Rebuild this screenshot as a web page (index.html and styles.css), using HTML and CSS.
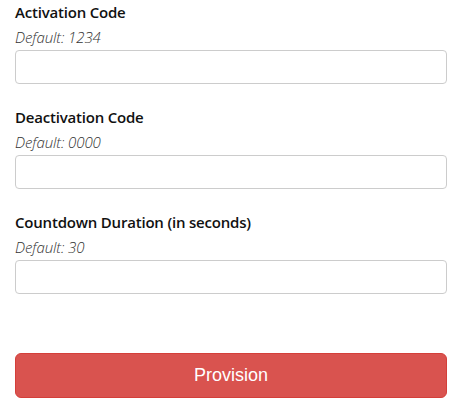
FILE: index.html
```html
<!DOCTYPE html>
<html>
<head>
<meta charset="utf-8">
<link rel="stylesheet" href="styles.css">
</head>
<body>
<form class="form">
  <div class="field">
    <label class="label">Activation Code</label>
    <div class="hint">Default: 1234</div>
    <input class="input" type="text">
  </div>
  <div class="field">
    <label class="label">Deactivation Code</label>
    <div class="hint">Default: 0000</div>
    <input class="input" type="text">
  </div>
  <div class="field">
    <label class="label">Countdown Duration (in seconds)</label>
    <div class="hint">Default: 30</div>
    <input class="input" type="text">
  </div>
  <button class="btn" type="button">Provision</button>
</form>
</body>
</html>
```
FILE: styles.css
```css
html, body {
  margin: 0;
  padding: 0;
  background: #fff;
}
.form {
  width: 432px;
  padding: 0 0 0 15px;
  display: flex;
  flex-direction: column;
  font-family: "Open Sans", "DejaVu Sans", sans-serif;
}
.field {
  display: flex;
  flex-direction: column;
  margin-bottom: 21px;
}
.label {
  font-size: 15px;
  font-weight: 600;
  color: #111;
  line-height: 20px;
  padding-top: 2px;
  letter-spacing: -0.2px;
}
.hint {
  font-size: 15px;
  font-weight: 300;
  font-style: italic;
  color: #333;
  line-height: 20px;
  margin-top: 5px;
  margin-bottom: 3px;
  letter-spacing: -0.1px;
}
.input {
  box-sizing: border-box;
  height: 34px;
  width: 100%;
  border: 1px solid #ccc;
  border-radius: 4px;
  margin: 0;
  padding: 6px 12px;
}
.btn {
  margin-top: 38px;
  box-sizing: border-box;
  height: 45px;
  width: 100%;
  background: #d9534f;
  border: 1px solid #d43f3a;
  border-radius: 6px;
  color: #fff;
  font-family: "Liberation Sans", Arial, sans-serif;
  font-size: 18px;
}
```
